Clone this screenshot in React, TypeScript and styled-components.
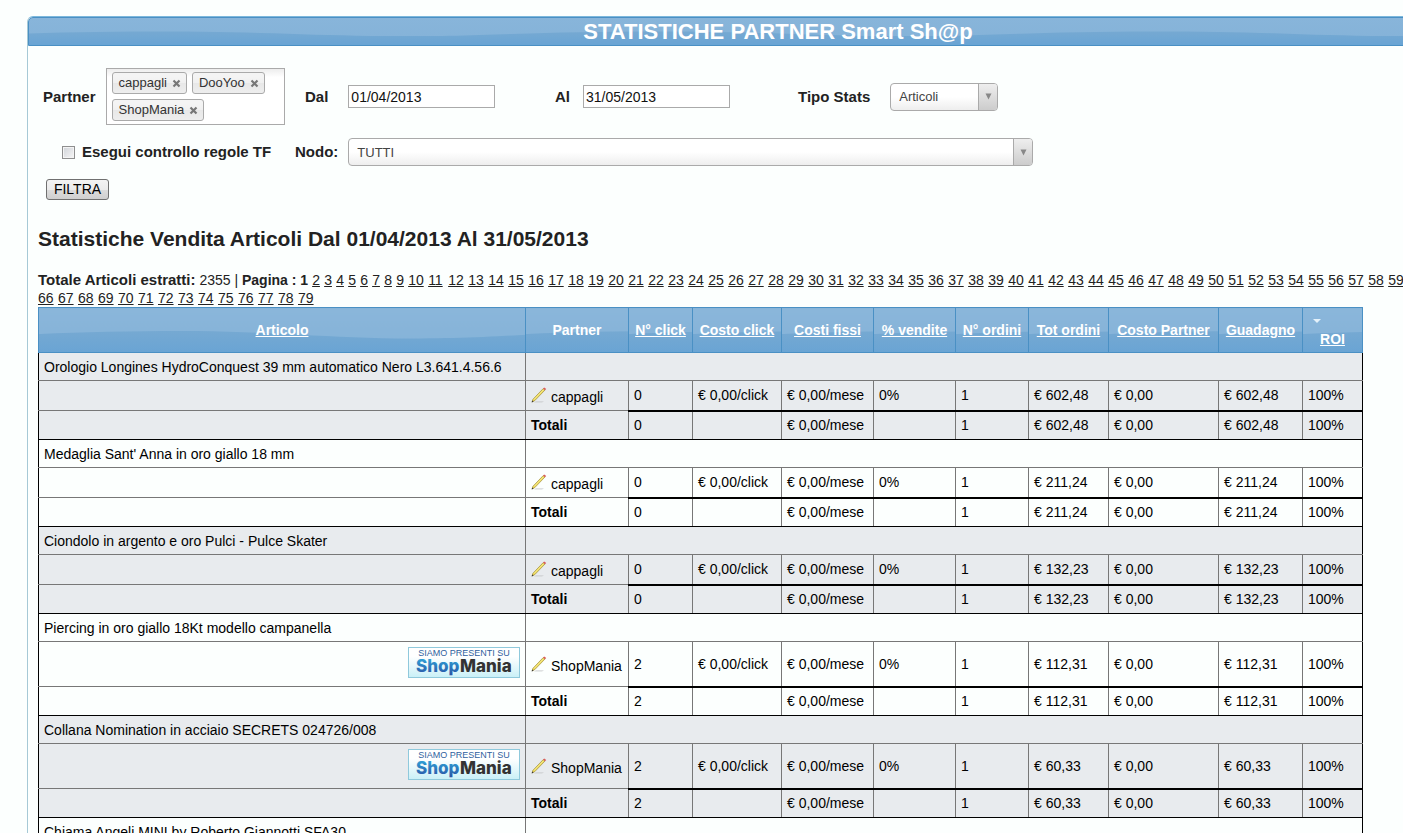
import React from 'react';
import styled, { createGlobalStyle, css } from 'styled-components';

const GlobalStyle = createGlobalStyle`
  *, *::before, *::after { box-sizing: border-box; }
  body {
    margin: 0;
    background: #fcfffe;
    color: #222;
    font: 14px/18px Arial, "Liberation Sans", sans-serif;
  }
  button, input, select { font-family: inherit; color: inherit; }
`;

const wave = (height: number) =>
  `url("data:image/svg+xml,${encodeURIComponent(
    `<svg xmlns='http://www.w3.org/2000/svg' width='500' height='${height}' preserveAspectRatio='none' viewBox='0 0 500 100'><linearGradient id='g' x2='0' y2='1'><stop offset='0' stop-color='#76a9d2'/><stop offset='1' stop-color='#69a4d4'/></linearGradient><path d='M0 57C40 52 90 50 142 50C230 50 290 67 372 67C420 67 450 63 500 57V100H0Z' fill='url(#g)'/></svg>`,
  )}")`;

const Page = styled.div`
  height: 100vh;
  overflow: auto;
  scrollbar-width: none;
  padding: 16px 0 0 27px;
`;

const Panel = styled.section`
  width: max-content;
  min-width: 1500px;
  border: 1px solid #a6c9d6;
  border-top-color: #7db8dc;
  border-radius: 6px;
`;

const PanelTitle = styled.h1`
  margin: 0;
  height: 29px;
  border: 1px solid #4a90c4;
  border-radius: 5px 5px 0 0;
  background: ${wave(27)} 0 0 / 500px 100%, linear-gradient(#88b5da, #84b2d8);
  color: #fff;
  font-size: 22px;
  line-height: 27px;
  text-align: center;
`;

const Filters = styled.form`
  display: grid;
  gap: 13px;
  padding: 22px 0 0 15px;
`;

const FilterRow = styled.div<{ $indent?: number }>`
  display: flex;
  align-items: center;
  padding-left: ${(p) => p.$indent ?? 0}px;
`;

const Field = styled.div<{ $width: number; $gap?: number }>`
  display: flex;
  align-items: center;
  gap: ${(p) => p.$gap ?? 10}px;
  width: ${(p) => p.$width}px;
`;

const Label = styled.label`
  font-size: 15px;
  font-weight: bold;
  white-space: nowrap;
`;

const ChipBox = styled.ul`
  display: flex;
  flex-wrap: wrap;
  align-content: flex-start;
  gap: 5px;
  width: 179px;
  height: 57px;
  margin: 0;
  padding: 3px 5px;
  border: 1px solid #aaa;
  background: linear-gradient(#eee 1%, #fff 15%);
  list-style: none;
`;

const Chip = styled.li`
  display: flex;
  align-items: center;
  gap: 5px;
  height: 22px;
  padding: 0 5px 0 6px;
  border: 1px solid #aaa;
  border-radius: 3px;
  background: linear-gradient(#f4f4f4 20%, #f0f0f0 50%, #e8e8e8 52%, #eee);
  color: #333;
  font-size: 13px;
  line-height: 20px;
`;

const ChipClose = styled.button`
  display: flex;
  padding: 0;
  border: 0;
  background: none;
`;

const DateInput = styled.input`
  width: 147px;
  height: 23px;
  padding: 0 2px;
  border: 1px solid #aaa;
  background: #fff;
  color: #111;
  font-size: 14px;
`;

const SelectFrame = styled.div<{ $width: number }>`
  position: relative;
  width: ${(p) => p.$width}px;
  height: 28px;
  border: 1px solid #aaa;
  border-radius: 4px;
  background: linear-gradient(#fff 50%, #eee);
  overflow: hidden;
`;

const Select = styled.select`
  width: 100%;
  height: 100%;
  padding: 0 24px 0 8px;
  border: 0;
  appearance: none;
  background: none;
  color: #444;
  font-size: 13px;
`;

const SelectArrow = styled.span`
  position: absolute;
  inset: 0 0 0 auto;
  display: grid;
  place-items: center;
  width: 19px;
  border-left: 1px solid #aaa;
  background: linear-gradient(#eee, #ccc);
  pointer-events: none;
`;

const CheckBox = styled.input`
  appearance: none;
  width: 13px;
  height: 13px;
  margin: 0;
  border: 1px solid #8e8f8f;
  background: linear-gradient(135deg, #cfd3d8, #f6f6f6);
  box-shadow: inset 0 0 0 1px #f4f4f4;
`;

const SubmitButton = styled.button`
  width: 63px;
  height: 21px;
  margin-left: 3px;
  padding: 0;
  border: 1px solid #707070;
  border-radius: 3px;
  background: linear-gradient(#f3f3f3, #ebebeb 50%, #ddd 50%, #cfcfcf);
  color: #000;
  font-size: 14px;
  line-height: 19px;
`;

const Results = styled.section`
  padding: 26px 0 20px 10px;
`;

const Heading = styled.h2`
  margin: 0 0 20px;
  font-size: 21px;
  line-height: 25px;
`;

const Pager = styled.nav`
  display: flex;
  flex-wrap: wrap;
  column-gap: 4px;
  width: 1490px;
`;

const PagerTotal = styled.b`
  font-size: 15px;
`;

const PageNumber = styled.a<{ $digits: number }>`
  width: ${(p) => p.$digits * 8}px;
  color: #222;
`;

const Table = styled.table`
  width: 1325px;
  table-layout: fixed;
  border-collapse: collapse;
  color: #000;
`;

const HeadCell = styled.th`
  height: 45px;
  padding: 0;
  border: 1px solid #4a90c4;
  background: ${wave(44)} 0 0 / 500px 100%, linear-gradient(#8ab6da, #84b2d8);
  color: #fff;
  white-space: nowrap;
  a { color: inherit; }
`;

const SortMark = styled.svg`
  display: block;
  margin: 6px 0 7px 10px;
`;

const Group = styled.tbody<{ $odd: boolean }>`
  background: ${(p) => (p.$odd ? '#e8ebee' : '#fcfffe')};
  border: 1px solid #000;
`;

const Row = styled.tr<{ $height: number }>`
  height: ${(p) => p.$height}px;
`;

const Cell = styled.td<{ $thick?: boolean; $bold?: boolean }>`
  padding: 0 5px;
  border: 1px solid #777;
  white-space: nowrap;
  font-weight: ${(p) => (p.$bold ? 'bold' : 'normal')};
  &:first-child { border-left-color: #000; }
  &:last-child { border-right-color: #000; }
  tr:first-child > & { border-top-color: #000; }
  tr:last-child > & { border-bottom-color: #000; }
  ${(p) => p.$thick && css`border-bottom: 2px solid #000;`}
`;

const PartnerName = styled.span`
  display: flex;
  align-items: center;
  gap: 4px;
  padding-top: 3px;
  svg { margin-bottom: 4px; }
`;

const Logo = styled.svg`
  display: block;
  margin: 0 0 4px auto;
`;

const Cross = () => (
  <svg width="9" height="9" viewBox="0 0 9 9" aria-hidden="true">
    <path d="M1.5 1.5 7.5 7.5M7.5 1.5 1.5 7.5" stroke="#777" strokeWidth="2.2" />
  </svg>
);

const Pencil = () => (
  <svg width="16" height="16" viewBox="0 0 16 16" aria-hidden="true">
    <path d="M3 15.4H11L13 14.2H5Z" fill="#c4c6c8" opacity=".7" />
    <path d="M1 15 2 12.2 12.2 1.6 14 3 3.8 13.6Z" fill="#ecd850" stroke="#94802f" strokeWidth=".6" />
    <path d="M3 12.6 12.6 2.7" stroke="#fbf3a6" strokeWidth=".8" />
    <path d="M12 1.6 13.2.4 15.2 2 14 3.2Z" fill="#d95c5c" />
    <path d="M.6 15.4 1.4 13.4 2.6 14.6Z" fill="#333" />
  </svg>
);

const ShopManiaLogo = () => (
  <Logo width="112" height="31" viewBox="0 0 112 31" role="img" aria-label="Siamo presenti su ShopMania">
    <defs>
      <linearGradient id="sm-bg" x2="0" y2="1">
        <stop offset=".3" stopColor="#fff" />
        <stop offset="1" stopColor="#c9f0f7" />
      </linearGradient>
      <linearGradient id="sm-blue" x2="0" y2="1">
        <stop offset=".2" stopColor="#2d9bd3" />
        <stop offset="1" stopColor="#2b4fa2" />
      </linearGradient>
    </defs>
    <rect x=".5" y=".5" width="111" height="30" fill="url(#sm-bg)" stroke="#8fc9dc" />
    <text x="56" y="9" textAnchor="middle" fontSize="9" fill="#2f5f9e">SIAMO PRESENTI SU</text>
    <g fontFamily="Inter, sans-serif" fontWeight="800" fontSize="17">
      <text x="8" y="25" fill="url(#sm-blue)">Shop</text>
      <text x="52" y="25" fill="#333">Mania</text>
    </g>
  </Logo>
);

const Dropdown = ({ id, width, value }: { id: string; width: number; value: string }) => (
  <SelectFrame $width={width}>
    <Select id={id} defaultValue={value}>
      <option>{value}</option>
    </Select>
    <SelectArrow>
      <svg width="7" height="7" viewBox="0 0 7 7" aria-hidden="true">
        <path d="M.5 .5H6.5L3.5 6.5Z" fill="#888" />
      </svg>
    </SelectArrow>
  </SelectFrame>
);

const columnWidths = [487, 103, 64, 89, 92, 82, 73, 80, 110, 84, 60];
const sortable = ['N° click', 'Costo click', 'Costi fissi', '% vendite', 'N° ordini', 'Tot ordini', 'Costo Partner', 'Guadagno'];

type Article = { name: string; partner?: string; clicks?: number; total?: string };

const articles: Article[] = [
  { name: 'Orologio Longines HydroConquest 39 mm automatico Nero L3.641.4.56.6', partner: 'cappagli', clicks: 0, total: '€ 602,48' },
  { name: "Medaglia Sant' Anna in oro giallo 18 mm", partner: 'cappagli', clicks: 0, total: '€ 211,24' },
  { name: 'Ciondolo in argento e oro Pulci - Pulce Skater', partner: 'cappagli', clicks: 0, total: '€ 132,23' },
  { name: 'Piercing in oro giallo 18Kt modello campanella', partner: 'ShopMania', clicks: 2, total: '€ 112,31' },
  { name: 'Collana Nomination in acciaio SECRETS 024726/008', partner: 'ShopMania', clicks: 2, total: '€ 60,33' },
  { name: 'Chiama Angeli MINI by Roberto Giannotti SFA30' },
];

const ArticleGroup = ({ article, odd }: { article: Article; odd: boolean }) => {
  const { name, partner, clicks, total } = article;
  const branded = partner === 'ShopMania';
  return (
    <Group $odd={odd}>
      <Row $height={28}>
        <Cell>{name}</Cell>
        <Cell colSpan={10} />
      </Row>
      {partner && (
        <>
          <Row $height={branded ? 45 : 30}>
            <Cell>{branded && <ShopManiaLogo />}</Cell>
            <Cell>
              <PartnerName><Pencil />{partner}</PartnerName>
            </Cell>
            {[clicks, '€ 0,00/click', '€ 0,00/mese', '0%', 1, total, '€ 0,00', total, '100%'].map((v, i) => (
              <Cell key={i} $thick>{v}</Cell>
            ))}
          </Row>
          <Row $height={29}>
            <Cell />
            <Cell $bold>Totali</Cell>
            {[clicks, '', '€ 0,00/mese', '', 1, total, '€ 0,00', total, '100%'].map((v, i) => (
              <Cell key={i}>{v}</Cell>
            ))}
          </Row>
        </>
      )}
    </Group>
  );
};

export default function App() {
  const pages = Array.from({ length: 78 }, (_, i) => i + 2);
  return (
    <Page>
      <GlobalStyle />
      <Panel>
        <PanelTitle>STATISTICHE PARTNER Smart Sh@p</PanelTitle>
        <Filters onSubmit={(e) => e.preventDefault()}>
          <FilterRow>
            <Field $width={262}>
              <Label as="span">Partner</Label>
              <ChipBox>
                {['cappagli', 'DooYoo', 'ShopMania'].map((p) => (
                  <Chip key={p}>
                    {p}
                    <ChipClose type="button" aria-label={`Rimuovi ${p}`}><Cross /></ChipClose>
                  </Chip>
                ))}
              </ChipBox>
            </Field>
            <Field $width={250} $gap={20}>
              <Label htmlFor="dal">Dal</Label>
              <DateInput id="dal" defaultValue="01/04/2013" />
            </Field>
            <Field $width={243} $gap={13}>
              <Label htmlFor="al">Al</Label>
              <DateInput id="al" defaultValue="31/05/2013" />
            </Field>
            <Field $width={220} $gap={20}>
              <Label htmlFor="tipo">Tipo Stats</Label>
              <Dropdown id="tipo" width={108} value="Articoli" />
            </Field>
          </FilterRow>
          <FilterRow $indent={19}>
            <Field $width={233} $gap={7}>
              <CheckBox id="regole" type="checkbox" />
              <Label htmlFor="regole">Esegui controllo regole TF</Label>
            </Field>
            <Field $width={740}>
              <Label htmlFor="nodo">Nodo:</Label>
              <Dropdown id="nodo" width={685} value="TUTTI" />
            </Field>
          </FilterRow>
          <FilterRow>
            <SubmitButton type="submit">FILTRA</SubmitButton>
          </FilterRow>
        </Filters>
        <Results>
          <Heading>Statistiche Vendita Articoli Dal 01/04/2013 Al 31/05/2013</Heading>
          <Pager aria-label="Pagine">
            <span><PagerTotal>Totale Articoli estratti:</PagerTotal> 2355 | <b>Pagina : 1</b></span>
            {pages.map((n) => (
              <PageNumber key={n} href={`#${n}`} $digits={String(n).length}>{n}</PageNumber>
            ))}
          </Pager>
          <Table>
            <colgroup>
              {columnWidths.map((w, i) => <col key={i} style={{ width: w }} />)}
            </colgroup>
            <thead>
              <tr>
                <HeadCell><a href="#articolo">Articolo</a></HeadCell>
                <HeadCell>Partner</HeadCell>
                {sortable.map((t) => <HeadCell key={t}><a href="#ordina">{t}</a></HeadCell>)}
                <HeadCell>
                  <SortMark width="8" height="4" viewBox="0 0 8 4" aria-hidden="true">
                    <path d="M0 0H8L4 4Z" fill="#e4f1fa" />
                  </SortMark>
                  <a href="#roi">ROI</a>
                </HeadCell>
              </tr>
            </thead>
            {articles.map((a, i) => <ArticleGroup key={a.name} article={a} odd={i % 2 === 0} />)}
          </Table>
        </Results>
      </Panel>
    </Page>
  );
}
